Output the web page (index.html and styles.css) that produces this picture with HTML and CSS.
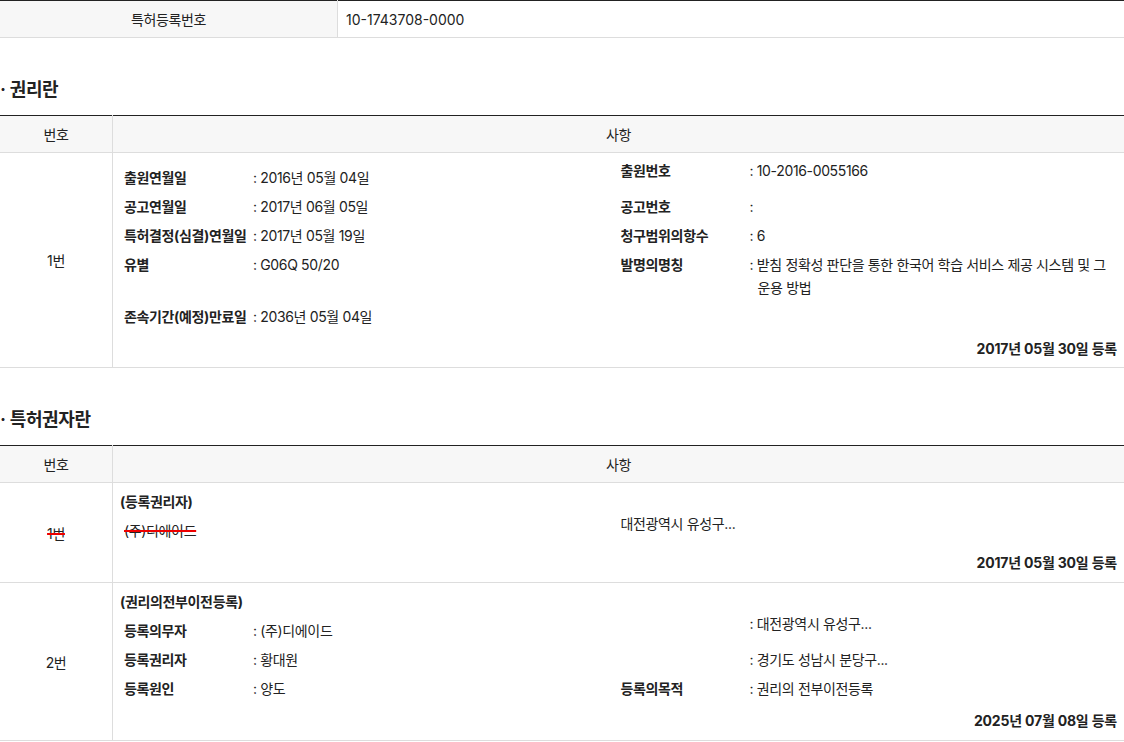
FILE: index.html
```html
<!DOCTYPE html>
<html lang="ko">
  <head>
    <meta charset="utf-8" />
    <meta name="viewport" content="width=device-width, initial-scale=1.0" />
    <link rel="stylesheet" href="styles.css">
  </head>
  <body>
    <table class="info">
      <tr>
        <th>특허등록번호</th>
        <td>10-1743708-0000</td>
      </tr>
    </table>

    <h3 class="tit">권리란</h3>
    <table class="list">
      <thead>
        <tr>
          <th class="no">번호</th>
          <th>사항</th>
        </tr>
      </thead>
      <tbody>
        <tr>
          <td class="no">1번</td>
          <td class="detail">
            <div class="grid first">
              <span class="lb">출원연월일</span>
              <span class="val">: 2016년 05월 04일</span>
              <span class="lb up">출원번호</span>
              <span class="val up">: 10-2016-0055166</span>

              <span class="lb">공고연월일</span>
              <span class="val">: 2017년 06월 05일</span>
              <span class="lb">공고번호</span>
              <span class="val">:</span>

              <span class="lb">특허결정(심결)연월일</span>
              <span class="val">: 2017년 05월 19일</span>
              <span class="lb">청구범위의항수</span>
              <span class="val">: 6</span>

              <span class="lb">유별</span>
              <span class="val">: G06Q 50/20</span>
              <span class="lb">발명의명칭</span>
              <span class="val">: 받침 정확성 판단을 통한 한국어 학습 서비스 제공 시스템 및 그 운용 방법</span>

              <span class="lb">존속기간(예정)만료일</span>
              <span class="val">: 2036년 05월 04일</span>
            </div>
            <p class="date">2017년 05월 30일 등록</p>
          </td>
        </tr>
      </tbody>
    </table>

    <h3 class="tit">특허권자란</h3>
    <table class="list owner">
      <thead>
        <tr>
          <th class="no">번호</th>
          <th>사항</th>
        </tr>
      </thead>
      <tbody>
        <tr>
          <td class="no"><del>1번</del></td>
          <td class="detail">
            <div class="grid">
              <span class="sub">(등록권리자)</span>
              <span class="name"><del>(주)디에이드</del></span>
              <span class="addr up">대전광역시 유성구...</span>
            </div>
            <p class="date">2017년 05월 30일 등록</p>
          </td>
        </tr>
        <tr>
          <td class="no">2번</td>
          <td class="detail">
            <div class="grid">
              <span class="sub">(권리의전부이전등록)</span>

              <span class="lb">등록의무자</span>
              <span class="val">: (주)디에이드</span>
              <span class="lb up"></span>
              <span class="val up">: 대전광역시 유성구...</span>

              <span class="lb">등록권리자</span>
              <span class="val">: 황대원</span>
              <span class="lb"></span>
              <span class="val">: 경기도 성남시 분당구...</span>

              <span class="lb">등록원인</span>
              <span class="val">: 양도</span>
              <span class="lb">등록의목적</span>
              <span class="val">: 권리의 전부이전등록</span>
            </div>
            <p class="date">2025년 07월 08일 등록</p>
          </td>
        </tr>
      </tbody>
    </table>
  </body>
</html>
```

FILE: styles.css
```css
body {
  margin: 0;
  font-family: "Inter", "Noto Sans CJK KR", sans-serif;
  font-size: 14px;
  letter-spacing: -0.35px;
  color: #222222;
}

table {
  width: 100%;
  border-collapse: collapse;
  border-top: 1px solid #222222;
}

table.info th {
  width: 337px;
  height: 36px;
  padding: 0;
  font-weight: normal;
  background-color: #f7f7f7;
  border-bottom: 1px solid #dddddd;
  border-right: 1px solid #dddddd;
}
table.info td {
  padding: 0 0 0 8px;
  letter-spacing: 0;
  border-bottom: 1px solid #dddddd;
}

h3.tit {
  margin: 39px 0 12px;
  font-size: 18px;
  line-height: 26px;
  font-weight: bold;
}
h3.tit::before {
  content: '·';
  padding-right: 4px;
}

table.list th {
  height: 36px;
  padding: 0;
  font-weight: normal;
  background-color: #f7f7f7;
  border-bottom: 1px solid #dddddd;
}
table.list th.no,
table.list td.no {
  width: 112px;
  border-right: 1px solid #dddddd;
  text-align: center;
}
table.list td {
  padding: 0;
  border-bottom: 1px solid #dddddd;
}

td.detail {
  padding: 4px 7px 7px 7px !important;
  line-height: 23px;
}
table.owner td.detail {
  padding-bottom: 8px !important;
}

del {
  text-decoration-color: #ee0000;
  text-decoration-thickness: 2px;
}

div.grid {
  display: grid;
  grid-template-columns: 129px 1fr 129px 1fr;
  padding-left: 4px;
}
div.grid.first {
  margin-top: 6px;
}
div.grid span {
  padding: 3px 0;
}
div.grid span.up {
  margin-top: -7px;
}
div.grid span.lb {
  font-weight: bold;
}
div.grid span.val {
  padding-left: 8px;
  text-indent: -8px;
}
div.grid span.sub {
  grid-column: 1 / 5;
  margin-left: -4px;
  font-weight: bold;
}
div.grid span.name {
  grid-column: 1 / 3;
}
div.grid span.addr {
  grid-column: 3 / 5;
}

p.date {
  margin: 6px 0 0;
  text-align: right;
  font-weight: bold;
  letter-spacing: -0.2px;
}
```
